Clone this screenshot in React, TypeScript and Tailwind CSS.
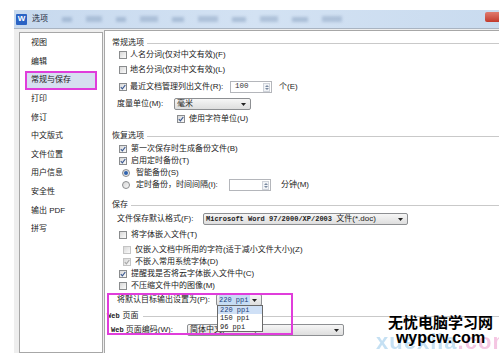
import type { ReactNode } from "react";

const font = "font-['Liberation_Sans','Noto_Sans_CJK_SC',sans-serif]";
const mono = "font-['Liberation_Mono','Noto_Sans_CJK_SC',monospace]";

function Check({ checked = false, disabled = false }: { checked?: boolean; disabled?: boolean }) {
  return (
    <span
      className={`relative flex h-[8px] w-[8px] shrink-0 items-center justify-center border bg-gradient-to-br from-[#d8d8d8] to-[#fbfbfb] ${
        disabled ? "border-[#c4c4c4]" : "border-[#8a8c8e]"
      }`}
    >
      {checked && (
        <svg width="6" height="6" viewBox="0 0 6 6">
          <path d="M0.8 3.2 L2.4 4.8 L5.3 1" fill="none" stroke={disabled ? "#a8a8a8" : "#3c5a92"} strokeWidth="1.2" />
        </svg>
      )}
    </span>
  );
}

function Radio({ on = false }: { on?: boolean }) {
  return (
    <span className="flex h-[8px] w-[8px] shrink-0 items-center justify-center rounded-full border border-[#8a8c8e] bg-gradient-to-br from-[#d6d6d6] to-[#f8f8f8]">
      {on && <span className="h-[4px] w-[4px] rounded-full bg-[#2f62ad]" />}
    </span>
  );
}

function Arrow() {
  return (
    <svg width="5" height="3" viewBox="0 0 5 3" className="shrink-0">
      <path d="M0 0 H5 L2.5 3 Z" fill="#222" />
    </svg>
  );
}

function Spin({ value = "" }: { value?: string }) {
  return (
    <span className="flex h-[12px] w-[42px] shrink-0 items-center border border-[#b4b6bb] bg-white">
      <span className={`flex-1 pl-[4px] text-[7.5px] leading-none text-[#333] ${mono}`}>{value}</span>
      <span className="mr-[1px] flex h-[9px] w-[7px] flex-col items-center justify-center gap-[1px] border border-[#cfd3da] bg-[#f1f3f6]">
        <svg width="4" height="2" viewBox="0 0 4 2"><path d="M0 2 L2 0 L4 2 Z" fill="#7a8aa0" /></svg>
        <svg width="4" height="2" viewBox="0 0 4 2"><path d="M0 0 L2 2 L4 0 Z" fill="#7a8aa0" /></svg>
      </span>
    </span>
  );
}

function Select({ w, children, hl = false }: { w: string; children: ReactNode; hl?: boolean }) {
  return (
    <span
      className={`flex h-[12px] ${w} shrink-0 items-center justify-between overflow-hidden rounded-[2px] border border-[#8d8f92] bg-gradient-to-b from-[#f6f6f6] to-[#dedede] pl-[2px] pr-[4px]`}
    >
      <span className={`whitespace-nowrap text-[8px] leading-[10px] ${hl ? "bg-[#c6dcf5] pr-[2px] text-[#1d3f7a]" : "text-[#222]"}`}>
        {children}
      </span>
      <Arrow />
    </span>
  );
}

function Group({ title, pl, mt }: { title: string; pl: string; mt: string }) {
  return (
    <div className={`flex h-[12px] items-center ${pl} ${mt}`}>
      <span className="whitespace-nowrap text-[8px] leading-none text-[#222]">{title}</span>
      <span className="ml-[3px] h-0 flex-1 border-t border-[#c9c9c9]" />
    </div>
  );
}

function Row({ className, children }: { className: string; children: ReactNode }) {
  return (
    <div className={`flex h-[12px] items-center whitespace-nowrap text-[8px] leading-none text-[#222] ${className}`}>
      {children}
    </div>
  );
}

const menu = ["视图", "编辑", "常规与保存", "打印", "修订", "中文版式", "文件位置", "用户信息", "安全性", "输出 PDF", "拼写"];

export default function App() {
  return (
    <div className={`relative h-[353px] w-[499px] overflow-hidden bg-white ${font}`}>
      <div className="h-[10px]" />
      <div className="ml-[14px] flex h-[343px] flex-col bg-[#eeeeee]">
        {/* title bar */}
        <div className="relative flex h-[18px] items-center bg-gradient-to-r from-[#c7d9ee] via-[#d3e2f3] to-[#c9dbef] pl-[2px]">
          <span className="flex h-[11px] w-[11px] items-center justify-center rounded-[1px] bg-[#2a63c4] text-[8px] font-bold leading-none text-white">
            W
          </span>
          <span className="ml-[5px] text-[8px] leading-none text-[#1c2a3c]">选项</span>
          <div className="ml-[14px] flex flex-1 items-center gap-[14px] opacity-40 blur-[1.5px]">
            <span className="h-[5px] w-[10px] bg-[#6f8aae]" />
            <span className="h-[6px] w-[16px] bg-[#7a93b5]" />
            <span className="h-[5px] w-[10px] bg-[#6f8aae]" />
            <span className="h-[6px] w-[18px] bg-[#7a93b5]" />
            <span className="h-[5px] w-[12px] bg-[#6f8aae]" />
            <span className="h-[6px] w-[20px] bg-[#7a93b5]" />
            <span className="h-[5px] w-[14px] bg-[#6f8aae]" />
            <span className="h-[6px] w-[18px] bg-[#7a93b5]" />
            <span className="h-[5px] w-[16px] bg-[#6f8aae]" />
            <span className="h-[6px] w-[20px] bg-[#7a93b5]" />
          </div>
          <span className="mt-[2px] h-[10px] w-[14px] self-start rounded-l-[2px] bg-gradient-to-b from-[#e07a6e] to-[#c2392c]" />
        </div>
        <div className="h-[1px] bg-[#a9b4c2]" />

        {/* body */}
        <div className="flex flex-1 pl-[5px]">
          {/* left nav */}
          <div className="mt-[3px] flex w-[84px] flex-col border border-[#a7a7a7] bg-white pt-[1px]">
            {menu.map((m) => {
              const sel = m === "常规与保存";
              return (
                <div key={m} className="flex h-[18.6px] items-stretch px-[5px]">
                  <div
                    className={`flex flex-1 items-center whitespace-nowrap border-2 pl-[4px] text-[8px] leading-none text-[#222] ${
                      sel ? "border-[#e03ddb] bg-[#d6dff0]" : "border-transparent"
                    }`}
                  >
                    {m}
                  </div>
                </div>
              );
            })}
          </div>

          {/* right pane */}
          <div className="ml-[1px] mt-[1px] flex flex-1 flex-col border-l border-t border-[#a7a7a7] bg-white">
            <Group title="常规选项" pl="pl-[7px]" mt="mt-[6px]" />
            <Row className="pl-[14px] gap-[3px]">
              <Check />
              <span>人名分词(仅对中文有效)(F)</span>
            </Row>
            <Row className="pl-[14px] gap-[3px] mt-[3px]">
              <Check />
              <span>地名分词(仅对中文有效)(L)</span>
            </Row>
            <Row className="pl-[14px] gap-[3px] mt-[5px]">
              <Check checked />
              <span className="w-[97px] shrink-0">最近文档管理列出文件(R):</span>
              <Spin value="100" />
              <span className="ml-[4px]">个(E)</span>
            </Row>
            <Row className="pl-[12px] mt-[5px]">
              <span className="w-[57px] shrink-0">度量单位(M):</span>
              <Select w="w-[77px]">毫米</Select>
            </Row>
            <Row className="pl-[72px] gap-[4px] mt-[3px]">
              <Check checked />
              <span>使用字符单位(U)</span>
            </Row>

            <Group title="恢复选项" pl="pl-[7px]" mt="mt-[5px]" />
            <Row className="pl-[14px] gap-[4px] mt-[1px]">
              <Check checked />
              <span>第一次保存时生成备份文件(B)</span>
            </Row>
            <Row className="pl-[14px] gap-[4px]">
              <Check checked />
              <span>启用定时备份(T)</span>
            </Row>
            <Row className="pl-[17px] gap-[6px]">
              <Radio on />
              <span>智能备份(S)</span>
            </Row>
            <Row className="pl-[17px] gap-[6px]">
              <Radio />
              <span className="w-[87px] shrink-0">定时备份，时间间隔(I):</span>
              <Spin />
              <span className="ml-[4px]">分钟(M)</span>
            </Row>

            <Group title="保存" pl="pl-[7px]" mt="mt-[8px]" />
            <Row className="pl-[12px] mt-[2px]">
              <span className="w-[86px] shrink-0">文件保存默认格式(F):</span>
              <Select w="w-[205px]">
                <span className={`text-[7px] font-bold ${mono}`}>Microsoft Word 97/2000/XP/2003 </span>
                <span>文件(*.doc)</span>
              </Select>
            </Row>
            <Row className="pl-[14px] gap-[4px] mt-[4px]">
              <Check />
              <span>将字体嵌入文件(T)</span>
            </Row>
            <Row className="pl-[18px] gap-[4px] mt-[3px] text-[#9a9a9a]">
              <Check disabled />
              <span>仅嵌入文档中所用的字符(适于减小文件大小)(Z)</span>
            </Row>
            <Row className="pl-[18px] gap-[4px] text-[#9a9a9a]">
              <Check checked disabled />
              <span>不嵌入常用系统字体(D)</span>
            </Row>
            <Row className="pl-[14px] gap-[4px]">
              <Check checked />
              <span>提醒我是否将云字体嵌入文件中(C)</span>
            </Row>
            <Row className="pl-[14px] gap-[4px]">
              <Check />
              <span>不压缩文件中的图像(M)</span>
            </Row>
            <Row className="pl-[12px] mt-[2px]">
              <span className="w-[99px] shrink-0">将默认目标输出设置为(P):</span>
              <Select w="w-[46px]" hl>
                <span className={`text-[7px] ${mono}`}>220 ppi</span>
              </Select>
            </Row>

            <div className="mt-[4px] flex h-[12px] items-center pl-[2px]">
              <span className={`text-[7px] font-bold leading-none text-[#222] ${mono}`}>Web</span>
              <span className="ml-[3px] text-[8px] leading-none text-[#222]">页面</span>
              <span className="ml-[4px] h-0 flex-1 border-t border-[#c9c9c9]" />
            </div>
            <Row className="pl-[6px] mt-[2px]">
              <span className="w-[76px] shrink-0">
                <span className={`text-[7px] font-bold ${mono}`}>Web</span> 页面编码(W):
              </span>
              <Select w="w-[157px]">简体中文(GB2312)</Select>
            </Row>
          </div>
        </div>
      </div>

      {/* open dropdown list */}
      <div className={`absolute left-[217px] top-[305px] flex w-[46px] flex-col border border-[#6a6a6a] bg-white text-[7px] leading-[8.3px] text-[#222] ${mono}`}>
        <span className="bg-[#cfe0f6] pl-[2px] text-[#1d3f7a]">220 ppi</span>
        <span className="pl-[2px]">150 ppi</span>
        <span className="pl-[2px]">96 ppi</span>
      </div>

      {/* annotation box */}
      <div className="absolute left-[107px] top-[293px] h-[42px] w-[186px] border-2 border-[#e03ddb]" />

      {/* watermark */}
      <div className="absolute left-[376px] top-[331px] text-[22px] font-bold leading-none tracking-[1px] opacity-50">
        <span className="text-[#8cc3e8]">xuexila</span>
        <span className="text-[#ea8fc6]">.com</span>
      </div>
      <div className="absolute left-[388px] top-[314px] flex flex-col items-center">
        <span className="text-[15px] font-bold leading-[17px] text-black">无忧电脑学习网</span>
        <span className="text-[16px] font-bold leading-[14px] text-black">wypcw.com</span>
      </div>
    </div>
  );
}
